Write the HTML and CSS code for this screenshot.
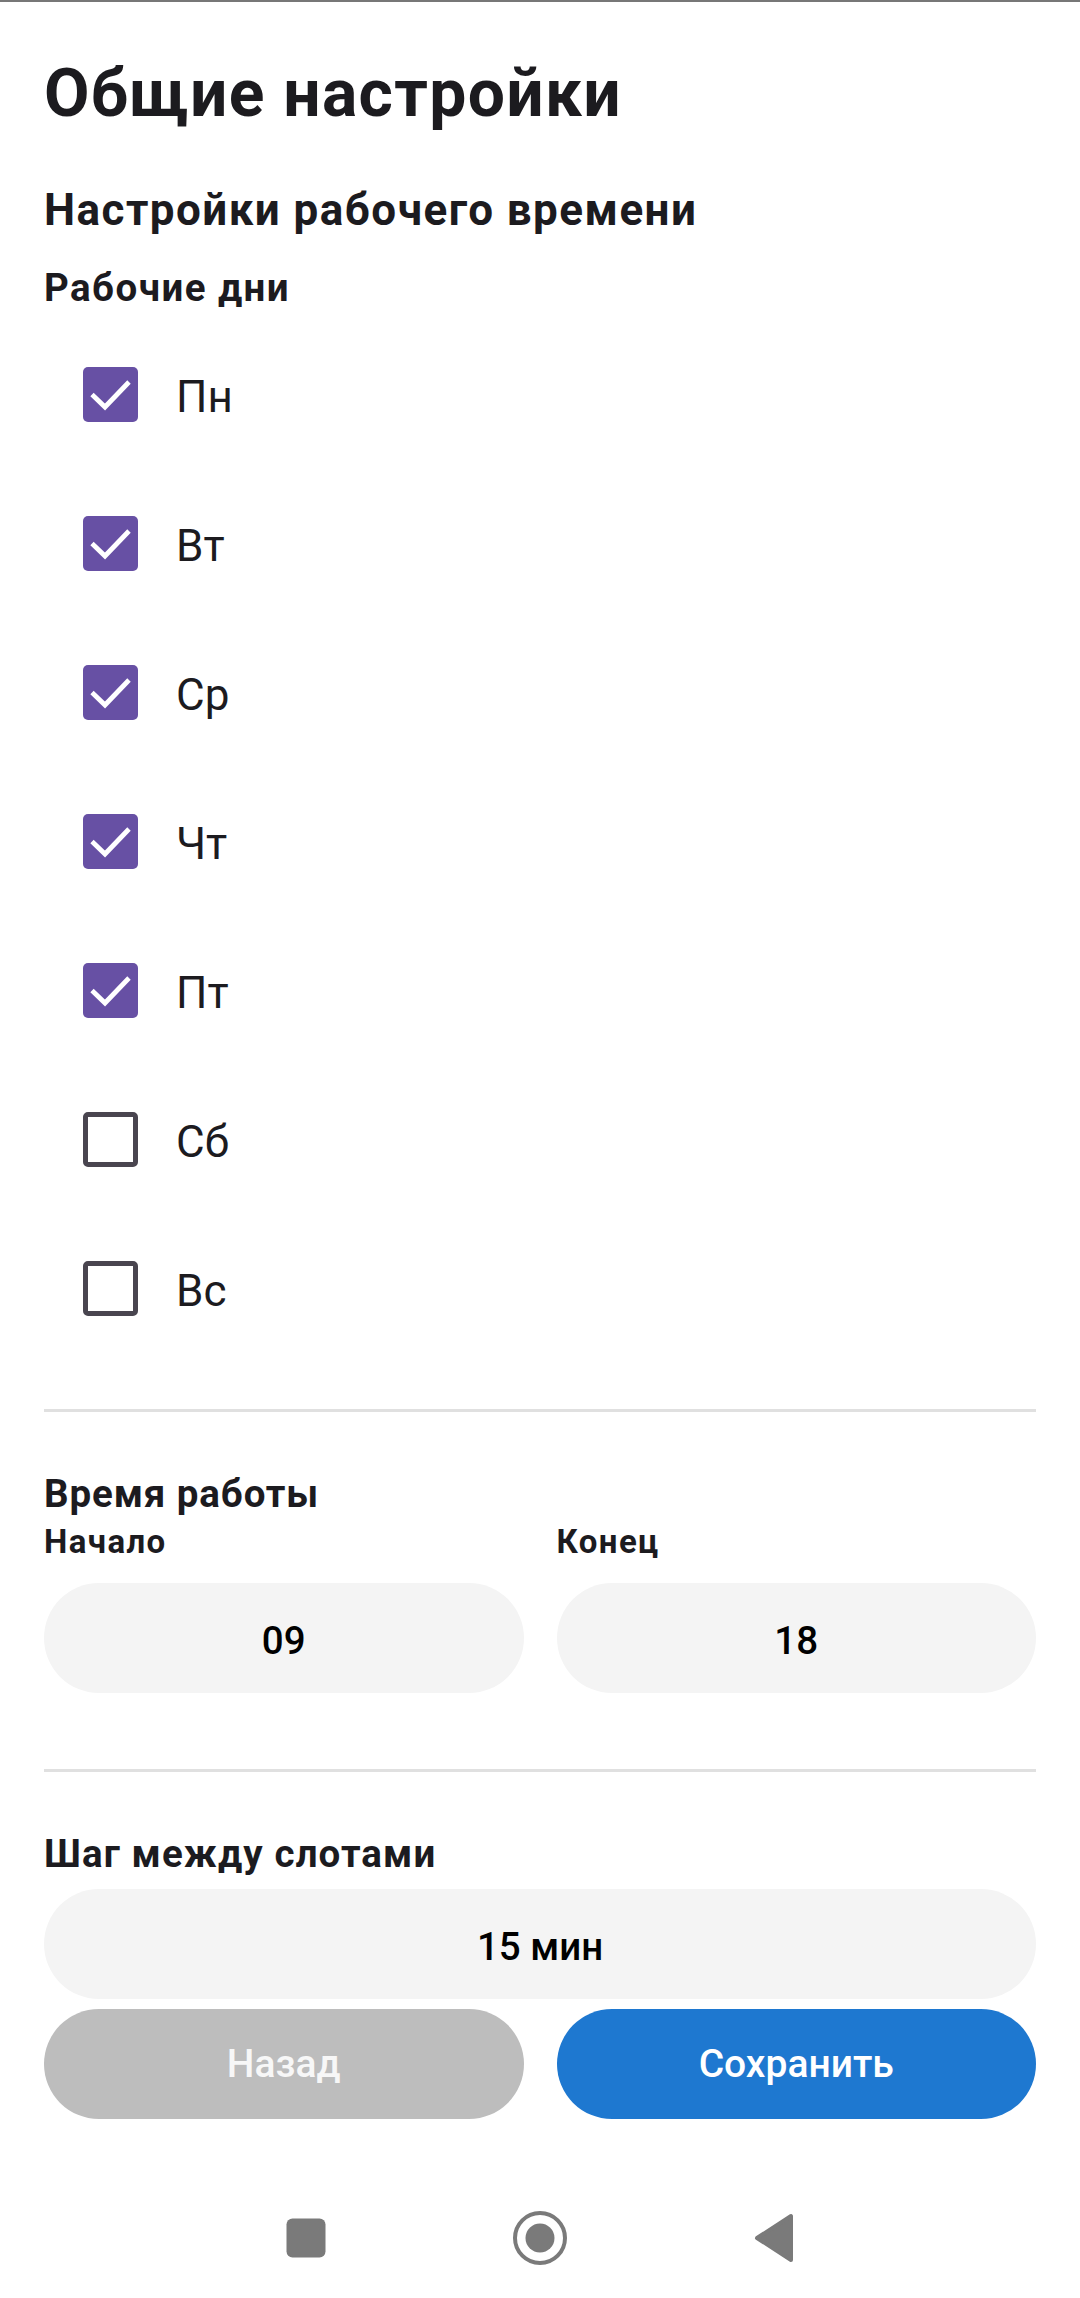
FILE: index.html
```html
<!DOCTYPE html>
<html lang="ru">
<head>
<meta charset="utf-8">
<title>Общие настройки</title>
<link rel="stylesheet" href="styles.css">
</head>
<body>
<div class="page">
  <div class="topline"></div>
  <main class="content">
    <h1 class="title">Общие настройки</h1>
    <h2 class="section-title">Настройки рабочего времени</h2>
    <h3 class="group-title">Рабочие дни</h3>
    <ul class="days">
      <li class="day"><span class="box checked"><svg viewBox="0 0 55 55" class="check"><polyline points="9,27.5 22,40 46,15"/></svg></span><span class="day-label">Пн</span></li>
      <li class="day"><span class="box checked"><svg viewBox="0 0 55 55" class="check"><polyline points="9,27.5 22,40 46,15"/></svg></span><span class="day-label">Вт</span></li>
      <li class="day"><span class="box checked"><svg viewBox="0 0 55 55" class="check"><polyline points="9,27.5 22,40 46,15"/></svg></span><span class="day-label">Ср</span></li>
      <li class="day"><span class="box checked"><svg viewBox="0 0 55 55" class="check"><polyline points="9,27.5 22,40 46,15"/></svg></span><span class="day-label">Чт</span></li>
      <li class="day"><span class="box checked"><svg viewBox="0 0 55 55" class="check"><polyline points="9,27.5 22,40 46,15"/></svg></span><span class="day-label">Пт</span></li>
      <li class="day"><span class="box"></span><span class="day-label">Сб</span></li>
      <li class="day"><span class="box"></span><span class="day-label">Вс</span></li>
    </ul>
    <div class="divider divider-first"></div>
    <h3 class="field-title">Время работы</h3>
    <div class="time-grid">
      <div class="time-col">
        <div class="small-label">Начало</div>
        <div class="pill">09</div>
      </div>
      <div class="time-col">
        <div class="small-label">Конец</div>
        <div class="pill">18</div>
      </div>
    </div>
    <div class="divider divider-second"></div>
    <h3 class="field-title step-title">Шаг между слотами</h3>
    <div class="pill step">15 мин</div>
    <div class="actions">
      <button class="btn btn-back">Назад</button>
      <button class="btn btn-save">Сохранить</button>
    </div>
  </main>
  <nav class="navbar">
    <span class="nav-slot">
      <svg class="nav-icon" viewBox="0 0 40 40" width="40" height="40"><rect x="0.5" y="0.5" width="39" height="39" rx="6" ry="6"/></svg>
    </span>
    <span class="nav-slot">
      <svg class="nav-icon" viewBox="0 0 56 56" width="56" height="56"><circle class="ring" cx="28" cy="28" r="25"/><circle cx="28" cy="28" r="14.5"/></svg>
    </span>
    <span class="nav-slot">
      <svg class="nav-icon" viewBox="0 0 42 50" width="42" height="50"><path class="tri" d="M38 3 L38 47 L4 25 Z"/></svg>
    </span>
  </nav>
</div>
</body>
</html>
```

FILE: styles.css
```css
* {
  box-sizing: border-box;
}

html, body {
  margin: 0;
  padding: 0;
  background: #ffffff;
}

body {
  font-family: Roboto, "Noto Sans", "Liberation Sans", sans-serif;
  color: #1c1b1f;
}

.page {
  width: 1080px;
  height: 2298px;
  display: flex;
  flex-direction: column;
  overflow: hidden;
}

.topline {
  height: 2px;
  background: #777777;
  flex: none;
}

.content {
  padding: 0 44px;
  flex: none;
}

.title {
  margin: 52px 0 0;
  font-size: 66px;
  line-height: 80px;
  font-weight: 700;
  letter-spacing: 1.3px;
}

.section-title {
  margin: 48px 0 0;
  font-size: 44px;
  line-height: 56px;
  font-weight: 700;
  letter-spacing: 1.45px;
}

.group-title {
  margin: 27px 0 0;
  font-size: 38.5px;
  line-height: 46px;
  font-weight: 700;
  letter-spacing: 1.45px;
}

.days {
  list-style: none;
  margin: 9px 0 0;
  padding: 0;
}

.day {
  height: 149px;
  display: flex;
  align-items: center;
}

.box {
  width: 55px;
  height: 55px;
  margin-left: 39px;
  border-radius: 5px;
  border: 5px solid #49454f;
  flex: none;
  display: flex;
}

.box.checked {
  border: none;
  background: #6750a4;
}

.check {
  width: 55px;
  height: 55px;
  fill: none;
  stroke: #ffffff;
  stroke-width: 4.8;
}

.day-label {
  margin-left: 38px;
  font-size: 44px;
  line-height: 52px;
  font-weight: 400;
  padding-top: 5px;
}

.divider {
  height: 3px;
  background: #e0e0e0;
}

.divider-first {
  margin-top: 46px;
}

.divider-second {
  margin-top: 76px;
}

.field-title {
  margin: 59px 0 0;
  font-size: 38.5px;
  line-height: 46px;
  font-weight: 700;
  letter-spacing: 0.9px;
}

.step-title {
  letter-spacing: 1.1px;
}

.time-grid {
  display: grid;
  grid-template-columns: 1fr 1fr;
  column-gap: 33px;
  margin-top: 6px;
}

.small-label {
  font-size: 33px;
  line-height: 38px;
  font-weight: 700;
  letter-spacing: 1.4px;
}

.pill {
  height: 110px;
  border-radius: 55px;
  background: #f4f4f4;
  display: flex;
  align-items: center;
  justify-content: center;
  padding-top: 5px;
  font-size: 38.5px;
  font-weight: 500;
  color: #000000;
  margin-top: 22px;
}

.pill.step {
  margin-top: 12px;
}

.actions {
  display: grid;
  grid-template-columns: 1fr 1fr;
  column-gap: 33px;
  margin-top: 10px;
}

.btn {
  height: 110px;
  border: none;
  border-radius: 55px;
  font-family: Roboto, "Noto Sans", "Liberation Sans", sans-serif;
  font-size: 39px;
  font-weight: 500;
  color: #ffffff;
  padding: 0;
}

.btn-back {
  background: #bdbdbd;
  color: #f7f7f7;
}

.btn-save {
  background: #1e78d0;
}

.navbar {
  margin-top: auto;
  height: 120px;
  display: flex;
  justify-content: center;
  align-items: center;
  gap: 170px;
  flex: none;
}

.nav-slot {
  width: 64px;
  height: 64px;
  display: flex;
  align-items: center;
  justify-content: center;
}

.nav-icon {
  fill: #7a7a7a;
}

.nav-icon .ring {
  fill: none;
  stroke: #7a7a7a;
  stroke-width: 4;
}

.nav-icon .tri {
  stroke: #7a7a7a;
  stroke-width: 4;
  stroke-linejoin: round;
}
```
